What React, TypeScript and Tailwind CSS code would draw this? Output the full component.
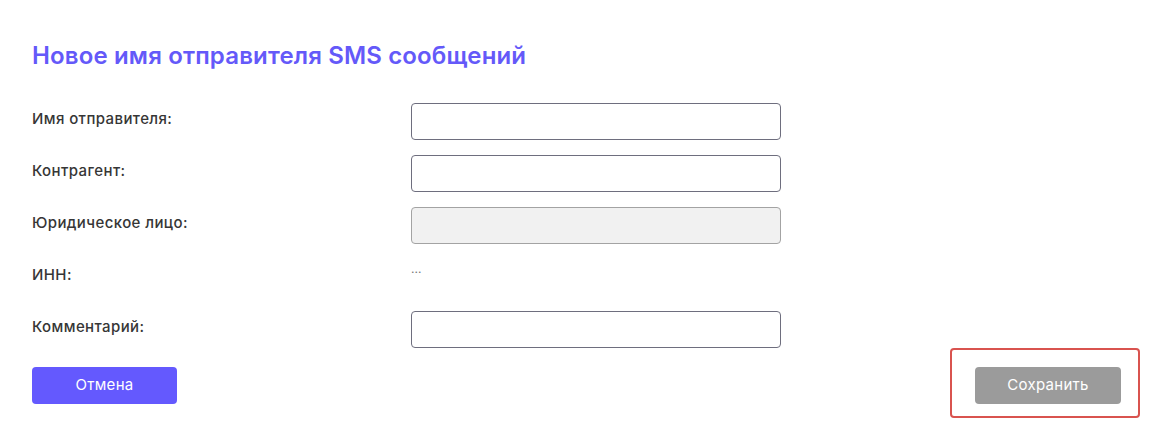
import React from 'react'

const rows = [
  { label: 'Имя отправителя:', kind: 'input' },
  { label: 'Контрагент:', kind: 'input' },
  { label: 'Юридическое лицо:', kind: 'disabled' },
  { label: 'ИНН:', kind: 'text' },
  { label: 'Комментарий:', kind: 'input' },
]

export default function App() {
  return (
    <div className="w-[1164px] h-[438px] bg-white pl-8 pr-[43px] pt-[42px] font-['Inter',sans-serif] text-[#333]">
      <h1 className="text-[24px] leading-[28px] font-semibold text-[#6459f9] tracking-[0.15px]">
        Новое имя отправителя SMS сообщений
      </h1>

      <div className="mt-[33px] flex flex-col gap-[15px]">
        {rows.map((row) => (
          <div key={row.label} className="flex h-[37px] items-start">
            <div className="w-[379px] pt-[6px] text-[15px] leading-[20px] font-medium tracking-[0.4px] text-[#363636]">
              {row.label}
            </div>
            {row.kind === 'input' && (
              <input className="w-[370px] h-[37px] rounded border border-[#6e6e7e] bg-white px-3 outline-none" />
            )}
            {row.kind === 'disabled' && (
              <input disabled className="w-[370px] h-[37px] rounded border border-[#a3a3a3] bg-[#f1f1f1] px-3 outline-none" />
            )}
            {row.kind === 'text' && (
              <div className="pt-[2px] text-[12px] leading-[16px] text-[#777]">...</div>
            )}
          </div>
        ))}
      </div>

      <div className="mt-[19px] flex items-start justify-between">
        <button className="w-[145px] h-[37px] rounded bg-[#6459fe] text-white text-[15px] tracking-[0.3px]">
          Отмена
        </button>
        <div className="relative">
          <div className="absolute -left-[25px] -top-[19px] w-[190px] h-[70px] rounded-sm border-2 border-[#d9534f]" />
          <button className="relative w-[146px] h-[37px] rounded bg-[#9b9b9b] text-white text-[15px] tracking-[0.3px]">
            Сохранить
          </button>
        </div>
      </div>
    </div>
  )
}
